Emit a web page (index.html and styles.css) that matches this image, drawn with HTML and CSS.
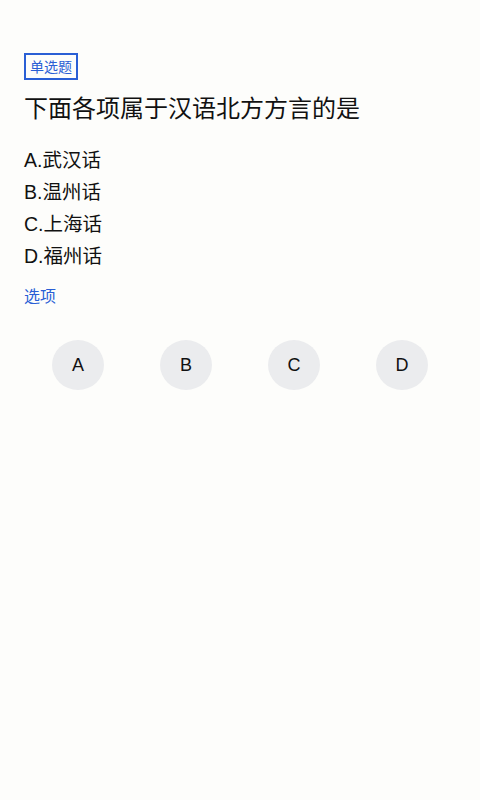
FILE: index.html
```html
<!DOCTYPE html>
<html lang="zh-CN">
<head>
<meta charset="utf-8">
<link rel="stylesheet" href="styles.css">
</head>
<body>
<div class="page">
  <div class="badge">单选题</div>
  <h1 class="question">下面各项属于汉语北方方言的是</h1>
  <ul class="options">
    <li>A.武汉话</li>
    <li>B.温州话</li>
    <li>C.上海话</li>
    <li>D.福州话</li>
  </ul>
  <div class="label">选项</div>
  <div class="choices">
    <div class="choice"><span class="circle">A</span></div>
    <div class="choice"><span class="circle">B</span></div>
    <div class="choice"><span class="circle">C</span></div>
    <div class="choice"><span class="circle">D</span></div>
  </div>
</div>
</body>
</html>
```
FILE: styles.css
```css
html, body {
  margin: 0;
  padding: 0;
  background: #fdfdfb;
  font-family: "Liberation Sans", "Noto Sans CJK SC", sans-serif;
  color: #111;
}
.page {
  padding: 53px 24px 0;
}
.badge {
  display: inline-flex;
  align-items: center;
  justify-content: center;
  box-sizing: border-box;
  width: 54px;
  height: 27px;
  padding-bottom: 1px;
  border: 2px solid #2a5fd5;
  color: #2a5fd5;
  font-size: 14px;
}
.question {
  margin: 13px 0 0;
  font-size: 24px;
  font-weight: normal;
  line-height: 32px;
  color: #111;
}
.options {
  list-style: none;
  margin: 19px 0 0;
  padding: 0;
}
.options li {
  font-size: 19.5px;
  line-height: 32px;
  color: #111;
}
.label {
  margin-top: 14px;
  font-size: 16px;
  line-height: 22px;
  color: #2a5fd5;
}
.choices {
  margin-top: 32px;
  display: grid;
  grid-template-columns: repeat(4, 1fr);
}
.choice {
  display: flex;
  justify-content: center;
}
.circle {
  width: 52px;
  height: 50px;
  border-radius: 50%;
  background: #ebecee;
  display: flex;
  align-items: center;
  justify-content: center;
  font-size: 18px;
  color: #111;
}
```
